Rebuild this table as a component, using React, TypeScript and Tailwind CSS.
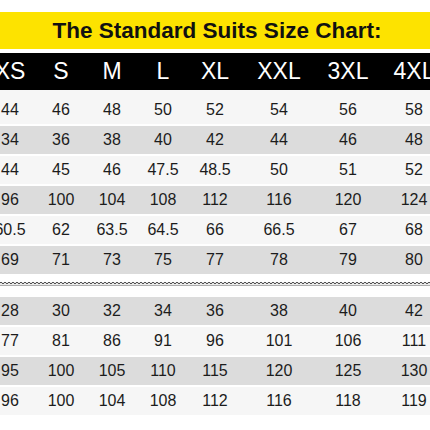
import React from "react";

const sizes = ["XS", "S", "M", "L", "XL", "XXL", "3XL", "4XL"];

const upper: (number | string)[][] = [
  [44, 46, 48, 50, 52, 54, 56, 58],
  [34, 36, 38, 40, 42, 44, 46, 48],
  [44, 45, 46, 47.5, 48.5, 50, 51, 52],
  [96, 100, 104, 108, 112, 116, 120, 124],
  [60.5, 62, 63.5, 64.5, 66, 66.5, 67, 68],
  [69, 71, 73, 75, 77, 78, 79, 80],
];

const lower: (number | string)[][] = [
  [28, 30, 32, 34, 36, 38, 40, 42],
  [77, 81, 86, 91, 96, 101, 106, 111],
  [95, 100, 105, 110, 115, 120, 125, 130],
  [96, 100, 104, 108, 112, 116, 118, 119],
];

const cols =
  "grid w-[464px] -ml-[16px] grid-cols-[52px_50px_52px_50px_54px_74px_64px_68px]";

const Row = ({ values, gray }: { values: (number | string)[]; gray: boolean }) => (
  <div className={`h-[28px] ${gray ? "bg-[#dcdcdc]" : "bg-[#f6f6f6]"}`}>
    <div className={`${cols} h-full items-center`}>
      {values.map((v, i) => (
        <span key={i} className="text-center text-[16px] text-[#1c1c1c]">
          {v}
        </span>
      ))}
    </div>
  </div>
);

const Wave = () => {
  let d = "M0 2";
  for (let x = 0; x < 430; x += 4) {
    d += ` Q${x + 1} 0.5 ${x + 2} 2 T${x + 4} 2`;
  }
  return (
    <svg width="430" height="6" viewBox="0 0 430 6" className="block">
      <path d={d} fill="none" stroke="#222" strokeWidth="0.9" />
      <line x1="0" y1="4.3" x2="430" y2="4.3" stroke="#555" strokeWidth="0.6" />
    </svg>
  );
};

export default function App() {
  return (
    <div
      className="w-[430px] h-[430px] overflow-hidden bg-white pt-[12px]"
      style={{ fontFamily: '"Liberation Sans", Arial, sans-serif' }}
    >
      <div className="h-[37px] bg-[#fde300] flex items-center justify-center">
        <h1 className="text-[22.5px] font-bold text-[#111] pl-[4px]">
          The Standard Suits Size Chart:
        </h1>
      </div>
      <div className="h-[4px]" />
      <div className="h-[37px] bg-black overflow-hidden">
        <div className={`${cols} h-full items-center`}>
          {sizes.map((s) => (
            <span key={s} className="text-center text-[23px] text-white">
              {s}
            </span>
          ))}
        </div>
      </div>
      <div className="h-[6px] bg-[#f6f6f6]" />
      <div className="flex flex-col gap-[2px]">
        {upper.map((r, i) => (
          <Row key={i} values={r} gray={i % 2 === 1} />
        ))}
      </div>
      <div className="h-[7px]" />
      <Wave />
      <div className="h-[10px]" />
      <div className="flex flex-col gap-[2px]">
        {lower.map((r, i) => (
          <Row key={i} values={r} gray={i % 2 === 0} />
        ))}
      </div>
    </div>
  );
}
